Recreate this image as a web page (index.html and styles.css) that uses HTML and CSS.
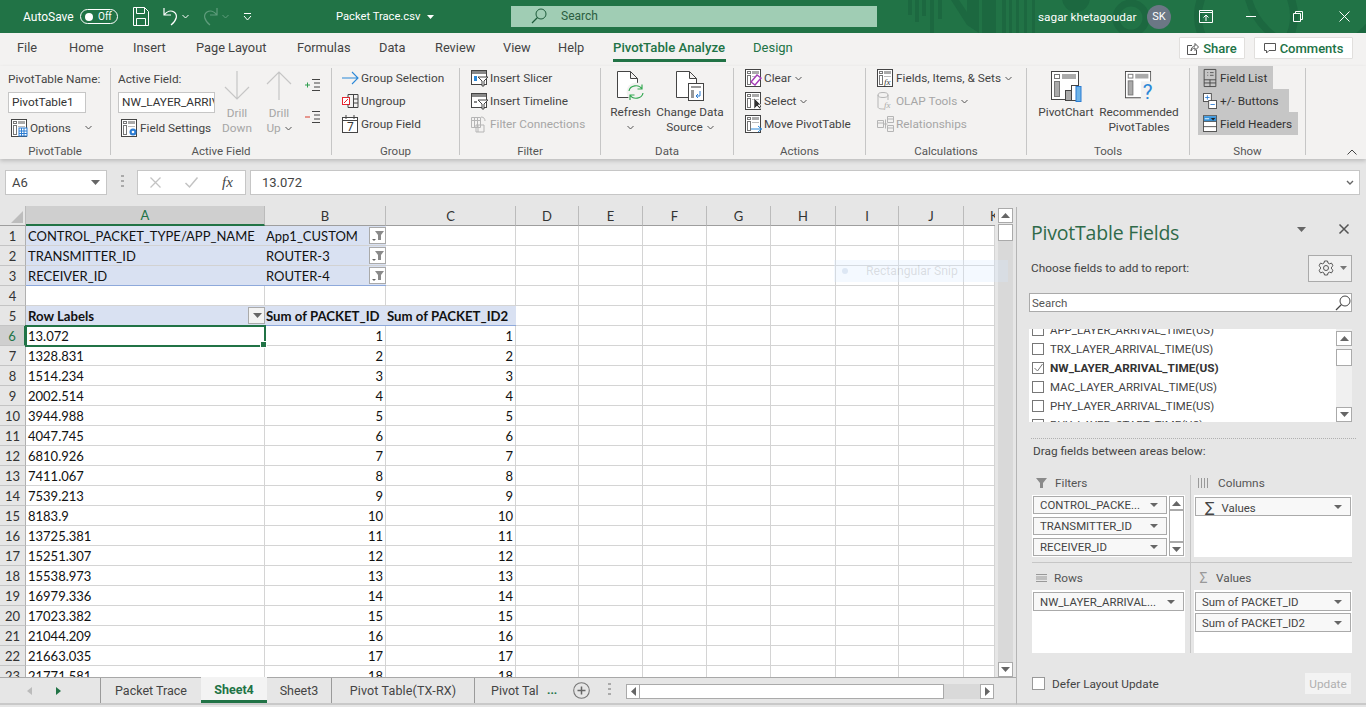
FILE: index.html
```html
<!DOCTYPE html>
<html lang="en">
<head>
<meta charset="utf-8">
<title>Packet Trace.csv - Excel</title>
<link rel="stylesheet" href="styles.css">
</head>
<body>
<svg class="defs" width="0" height="0" aria-hidden="true">
  <defs>
    <symbol id="pv" viewBox="0 0 17 18">
      <rect x=".5" y=".5" width="15" height="17" fill="#fff" stroke="#444"/>
      <rect x="2.5" y="2.5" width="3" height="2" fill="#fff" stroke="#777"/>
      <rect x="7" y="2" width="7" height="3" fill="#aaa"/>
      <rect x="2.5" y="6.5" width="3" height="9" fill="#fff" stroke="#777"/>
      <rect x="7" y="7" width="7" height="1" fill="#bbb"/>
    </symbol>
    <symbol id="large" viewBox="0 0 28 30">
      <rect x=".5" y=".5" width="27" height="28" fill="#fff" stroke="#444"/>
      <rect x="3.5" y="3.5" width="5" height="4" fill="#fff" stroke="#777"/>
      <rect x="11" y="3" width="14" height="5" fill="#aaa"/>
      <rect x="3.5" y="10.5" width="5" height="15" fill="#aaa" stroke="#777"/>
    </symbol>
    <symbol id="tri" viewBox="0 0 9 5"><path d="M0 0h9L4.500 5z" fill="#666"/></symbol>
    <symbol id="chev" viewBox="0 0 7 5"><path d="M.5 1l3 3 3-3" fill="none" stroke="#555" stroke-width="1"/></symbol>
  </defs>
</svg>

<header class="titlebar">
  <svg class="decor" width="460" height="33" viewBox="0 0 460 33" aria-hidden="true">
    <g fill="#1c6840">
      <rect x="2" y="0" width="4" height="15"/><rect x="9" y="0" width="4" height="22"/><rect x="16" y="0" width="4" height="16"/><rect x="24" y="0" width="4" height="33"/><rect x="32" y="0" width="4" height="19"/>
      <path d="M45 0h8l8 12V0h12v33H73L61 25z"/>
      <rect x="76" y="0" width="14" height="33"/><rect x="96" y="0" width="4" height="33"/><rect x="103" y="0" width="3" height="33"/><rect x="110" y="0" width="3" height="33"/><rect x="118" y="0" width="3" height="33"/><rect x="126" y="0" width="3" height="33"/>
      <circle cx="170" cy="-2" r="14"/>
    </g>
    <g fill="none" stroke="#1c6840">
      <circle cx="225" cy="18" r="15" stroke-width="7"/>
      <circle cx="340" cy="16" r="48" stroke-width="8"/>
      <circle cx="410" cy="-20" r="70" stroke-width="7"/>
    </g>
  </svg>
  <span class="autosave">AutoSave</span>
  <span class="toggle"><i class="knob"></i><span>Off</span></span>
  <svg class="qa-save" width="16" height="19" viewBox="0 0 16 19"><path d="M.5.500h11l4 4v14H.5zM3.500.500v6h8v-6M3.500 18.500v-7h9v7" fill="none" stroke="#fff"/></svg>
  <svg class="qa-undo" width="16" height="19" viewBox="0 0 16 19"><path d="M1 1v7h7M1 8c3-4 7-5 10-3 4 3 3 8-3 13" fill="none" stroke="#fff" stroke-width="1.200"/></svg>
  <svg class="qa-chev" width="7" height="5" viewBox="0 0 7 5"><path d="M.5 1l3 3 3-3" fill="none" stroke="#fff"/></svg>
  <svg class="qa-redo" width="16" height="19" viewBox="0 0 16 19"><path d="M15 1v7H8M15 8c-3-4-7-5-10-3-4 3-3 8 3 13" fill="none" stroke="#5f9c7c" stroke-width="1.200"/></svg>
  <svg class="qa-chev2" width="7" height="5" viewBox="0 0 7 5"><path d="M.5 1l3 3 3-3" fill="none" stroke="#5f9c7c"/></svg>
  <svg class="qa-more" width="9" height="8" viewBox="0 0 9 8"><path d="M1 .500h7M1 3l3.500 4L8 3" fill="none" stroke="#fff"/></svg>
  <span class="doc">Packet Trace.csv</span>
  <svg class="doc-caret" width="7" height="4" viewBox="0 0 7 4"><path d="M0 0h7L3.500 4z" fill="#fff"/></svg>
  <div class="searchbox">
    <svg width="16" height="16" viewBox="0 0 16 16"><circle cx="10" cy="6" r="5" fill="none" stroke="#1d5b3a"/><path d="M6.500 9.500L1 15" stroke="#1d5b3a" stroke-width="1.200"/></svg>
    <span>Search</span>
  </div>
  <span class="user">sagar khetagoudar</span>
  <span class="avatar">SK</span>
  <div class="winbtns">
    <svg width="14" height="13" viewBox="0 0 14 13"><path d="M.5 2.500h13v10H.5zM.5.500h13v2h-13zM7 11V5M4.500 7.500L7 5l2.500 2.500" fill="none" stroke="#fff"/></svg>
    <svg width="10" height="1" viewBox="0 0 10 1"><path d="M0 .500h10" stroke="#fff"/></svg>
    <svg width="10" height="11" viewBox="0 0 10 11"><path d="M.5 2.500h7v8h-7zM2.500 2.500v-2h7v8h-2" fill="none" stroke="#fff"/></svg>
    <svg width="11" height="11" viewBox="0 0 11 11"><path d="M.5.500l10 10M10.500.500l-10 10" stroke="#fff"/></svg>
  </div>
</header>

<nav class="tabsrow">
  <div class="tabs">
    <span>File</span><span>Home</span><span>Insert</span><span>Page Layout</span><span>Formulas</span><span>Data</span><span>Review</span><span>View</span><span>Help</span>
    <span class="ctx active">PivotTable Analyze</span><span class="ctx">Design</span>
  </div>
  <button class="share">
    <svg width="12" height="13" viewBox="0 0 12 13"><path d="M5 3.500H.5v9h9V8M4 9c0-3 2-5 4-5V1.500L11.500 5 8 8.500V6C6 6 5 7 4 9z" fill="none" stroke="#555"/></svg>
    <span>Share</span>
  </button>
  <button class="comments">
    <svg width="12" height="13" viewBox="0 0 12 13"><path d="M.5 1.500h11v7H5L2.500 11V8.500h-2z" fill="none" stroke="#555"/></svg>
    <span>Comments</span>
  </button>
</nav>

<section class="ribbon">
  <div class="group g1">
    <div class="body">
      <div class="stack">
        <div class="label-row">PivotTable Name:</div>
        <div class="field-row"><span class="rinput w78">PivotTable1</span></div>
        <div class="row tight"><svg class="ic" width="17" height="18"><use href="#pv"/><rect x="8" y="9" width="8" height="8" fill="#fff" stroke="#2b7cd3"/><path d="M10.500 9v8M13 9v8M8 12h8M8 14.500h8" stroke="#2b7cd3"/></svg><span>Options</span><svg class="chev mlo" width="7" height="5"><use href="#chev"/></svg></div>
      </div>
    </div>
    <div class="glabel">PivotTable</div>
  </div>

  <div class="group g2">
    <div class="body">
      <div class="stack">
        <div class="label-row">Active Field:</div>
        <div class="field-row"><span class="rinput w97">NW_LAYER_ARRIV</span></div>
        <div class="row tight"><svg class="ic" width="17" height="18"><use href="#pv"/><circle cx="12" cy="13" r="3.500" fill="#2b7cd3"/><circle cx="12" cy="13" r="1.300" fill="#fff"/></svg><span>Field Settings</span></div>
      </div>
      <div class="drill">
        <svg width="26" height="29" viewBox="0 0 26 29"><path d="M13 0v28M1 16l12 12 12-12" fill="none" stroke="#c6c6c6" stroke-width="1.200"/></svg>
        <span>Drill</span><span>Down</span>
      </div>
      <div class="drill">
        <svg width="26" height="29" viewBox="0 0 26 29"><path d="M13 29V1M1 13L13 1l12 12" fill="none" stroke="#c6c6c6" stroke-width="1.200"/></svg>
        <span>Drill</span><span>Up <svg width="7" height="5"><use href="#chev"/></svg></span>
      </div>
      <div class="pm">
        <svg width="15" height="14" viewBox="0 0 15 14"><path d="M0 7h5M2.500 4.500v5" stroke="#2e9e4f"/><path d="M7 1.500h8M9 5h6M9 9h6M7 12.500h8" stroke="#444"/></svg>
        <svg width="15" height="14" viewBox="0 0 15 14"><path d="M0 7h5" stroke="#d83b2b"/><path d="M7 1.500h8M9 5h6M9 9h6M7 12.500h8" stroke="#444"/></svg>
      </div>
    </div>
    <div class="glabel">Active Field</div>
  </div>

  <div class="group g3">
    <div class="body list">
      <div class="row"><svg class="ic" width="17" height="18" viewBox="0 0 17 18"><path d="M0 9h16M10 3l6 6-6 6" fill="none" stroke="#2b88d8" stroke-width="1.100"/></svg><span>Group Selection</span></div>
      <div class="row"><svg class="ic" width="17" height="18" viewBox="0 0 17 18"><rect x=".5" y="5.500" width="7" height="7" fill="#fff" stroke="#e8252f"/><path d="M2 11l4-4" stroke="#e8252f"/><path d="M6 2.500h10v13H6M11.500 2.500v13M11.500 7h4.500M11.500 11h4.500M6 2.500v3M6 12.500v3" fill="none" stroke="#444"/></svg><span>Ungroup</span></div>
      <div class="row"><svg class="ic" width="17" height="18" viewBox="0 0 17 18"><rect x=".5" y="2.500" width="15" height="15" fill="#fff" stroke="#444"/><path d="M.5 5.500h15M4 0v4M12 0v4" stroke="#444"/><text x="5" y="15.500" class="cal">7</text></svg><span>Group Field</span></div>
    </div>
    <div class="glabel">Group</div>
  </div>

  <div class="group g4">
    <div class="body list">
      <div class="row"><svg class="ic" width="17" height="18" viewBox="0 0 17 18"><rect x=".5" y="1.500" width="15" height="14" fill="#fff" stroke="#444"/><rect x="1" y="2" width="14" height="3" fill="#888"/><rect x="3" y="7" width="3" height="5" fill="#2b88d8"/><path d="M7 8h10l-4 4v5h-2v-5z" fill="#fff" stroke="#444"/></svg><span>Insert Slicer</span></div>
      <div class="row"><svg class="ic" width="17" height="18" viewBox="0 0 17 18"><rect x=".5" y="1.500" width="15" height="14" fill="#fff" stroke="#444"/><rect x="1" y="2" width="14" height="3" fill="#888"/><rect x="3" y="9" width="3" height="2" fill="#888"/><path d="M7 8h10l-4 4v5h-2v-5z" fill="#fff" stroke="#444"/></svg><span>Insert Timeline</span></div>
      <div class="row off"><svg class="ic" width="17" height="18" viewBox="0 0 17 18"><path d="M.5 2.500h9v10h-9zM.5 5.500h9M3.500 2.500v10M6.500 2.500v10M10 2c3 0 4 2 4 4M5 10h8v7H5zM7 10v7" fill="#f3f2f1" stroke="#b5b5b5"/></svg><span>Filter Connections</span></div>
    </div>
    <div class="glabel">Filter</div>
  </div>

  <div class="group g5">
    <div class="body">
      <div class="big w-ref">
        <svg width="28" height="31" viewBox="0 0 28 31"><path d="M.5.500h13l7 7v19H.5zM13.500.500v7h7" fill="#fff" stroke="#444"/><circle cx="19" cy="21" r="9.500" fill="#f3f2f1"/><path d="M12 20c1-6 10-7 13-2M26 22c-1 6-10 7-13 2M25 13.500V18h-4.500M13 29v-5h4.500" fill="none" stroke="#35a853" stroke-width="1.200"/></svg>
        <span>Refresh</span><svg class="bigchev" width="7" height="5"><use href="#chev"/></svg>
      </div>
      <div class="big w-chg">
        <svg width="36" height="31" viewBox="0 0 36 31"><path d="M4.500.500h13l7 7v19h-20zM17.500.500v7h7" fill="#fff" stroke="#444"/><rect x="16.500" y="12.500" width="15" height="17" fill="#fff" stroke="#444"/><rect x="19" y="15" width="10" height="2" fill="#999"/><rect x="19" y="19" width="3" height="8" fill="#999"/><path d="M28 20v5h-4M26 23l-2 2 2 2" fill="none" stroke="#2b7cd3"/></svg>
        <span>Change Data</span><span>Source <svg width="7" height="5"><use href="#chev"/></svg></span>
      </div>
    </div>
    <div class="glabel">Data</div>
  </div>

  <div class="group g6">
    <div class="body list">
      <div class="row"><svg class="ic" width="17" height="18"><use href="#pv"/><path d="M6 13l6-7 4 3-6 7z" fill="#fff" stroke="#a33bb5" stroke-width="1.400"/></svg><span>Clear <svg width="7" height="5"><use href="#chev"/></svg></span></div>
      <div class="row"><svg class="ic" width="17" height="18"><use href="#pv"/><path d="M9 6v11l3-3 3 3 1-1-3-3h3z" fill="#333" stroke="#fff" stroke-width=".6"/></svg><span>Select <svg width="7" height="5"><use href="#chev"/></svg></span></div>
      <div class="row"><svg class="ic" width="17" height="18"><use href="#pv"/><path d="M6 14h11M13 11l3.500 3-3.500 3" fill="none" stroke="#2b88d8"/></svg><span>Move PivotTable</span></div>
    </div>
    <div class="glabel">Actions</div>
  </div>

  <div class="group g7">
    <div class="body list">
      <div class="row"><svg class="ic" width="17" height="18"><use href="#pv"/><text x="7" y="16" class="fx">fx</text></svg><span>Fields, Items, &amp; Sets <svg width="7" height="5"><use href="#chev"/></svg></span></div>
      <div class="row off"><svg class="ic" width="17" height="18" viewBox="0 0 17 18"><ellipse cx="6" cy="3" rx="5" ry="2.500" fill="none" stroke="#b5b5b5"/><path d="M1 3v12c0 2 4 2 6 2M11 3v5" fill="none" stroke="#b5b5b5"/><text x="7" y="16" class="fx off">fx</text></svg><span>OLAP Tools <svg width="7" height="5"><use href="#chev"/></svg></span></div>
      <div class="row off"><svg class="ic" width="17" height="18" viewBox="0 0 17 18"><path d="M.5 5.500h6v7h-6zM10.500 1.500h6v6h-6zM10.500 10.500h6v6h-6zM6.500 9h4M8.500 4.500v9M.5 8h6M10.500 4h6M10.500 13h6" fill="none" stroke="#b5b5b5"/></svg><span>Relationships</span></div>
    </div>
    <div class="glabel">Calculations</div>
  </div>

  <div class="group g8">
    <div class="body">
      <div class="big w-chart">
        <svg width="30" height="31" viewBox="0 0 30 31"><use href="#large" width="28" height="30"/><rect x="14.500" y="19.500" width="6" height="10" fill="#aaa" stroke="#444"/><rect x="20.500" y="14.500" width="6" height="15" fill="#fff" stroke="#444"/><rect x="25" y="15.500" width="5" height="15" fill="#6db3e8" stroke="#2b7cd3"/></svg>
        <span>PivotChart</span>
      </div>
      <div class="big w-rec">
        <svg width="30" height="33" viewBox="0 0 30 33"><use href="#large" width="28" height="30"/><rect x="17" y="11" width="13" height="22" fill="#f3f2f1"/><text x="19" y="30" class="qm">?</text></svg>
        <span>Recommended</span><span>PivotTables</span>
      </div>
    </div>
    <div class="glabel">Tools</div>
  </div>

  <div class="group g9">
    <div class="body showlist">
      <div class="show s1"><svg width="14" height="20" viewBox="0 0 14 20"><path d="M.5.500h13v19H.5zM.5 12h13M7 12v7.500M.5 15.500h13" fill="none" stroke="#444"/><path d="M4 4h1M4 7h1M7 4h4M7 7h4" stroke="#555"/></svg><span>Field List</span></div>
      <div class="show s2"><svg width="16" height="20" viewBox="0 0 16 20"><rect x=".5" y="1.500" width="9" height="9" fill="#fff" stroke="#444"/><path d="M2.500 6h5M5 3.500v5" stroke="#2b7cd3"/><rect x="6.500" y="9.500" width="9" height="9" fill="#fff" stroke="#444"/><path d="M8.500 14h5" stroke="#2b7cd3"/></svg><span>+/- Buttons</span></div>
      <div class="show s3"><svg width="16" height="20" viewBox="0 0 16 20"><rect x=".5" y=".500" width="15" height="18" fill="#fff" stroke="#444"/><rect x="1" y="1" width="14" height="6" fill="#3a96dd"/><path d="M2 4h5" stroke="#fff"/><path d="M9 3h5l-2.500 3z" fill="#222"/><path d="M.5 7h15M.5 13h15" stroke="#444"/></svg><span>Field Headers</span></div>
    </div>
    <div class="glabel">Show</div>
  </div>
  <div class="collapse"><svg width="10" height="6" viewBox="0 0 10 6"><path d="M.5 5.500L5 1l4.500 4.500" fill="none" stroke="#444"/></svg></div>
</section>

<section class="formulabar">
  <div class="namebox"><span>A6</span><svg width="9" height="5"><use href="#tri"/></svg></div>
  <span class="grip"></span>
  <div class="fxbox">
    <svg width="11" height="11" viewBox="0 0 11 11"><path d="M.5.500l10 10M10.500.500l-10 10" stroke="#c3c3c3" stroke-width="1.300"/></svg>
    <svg width="13" height="11" viewBox="0 0 13 11"><path d="M.5 6l4 4L12.500.500" fill="none" stroke="#c3c3c3" stroke-width="1.500"/></svg>
    <span class="fxlabel">fx</span>
  </div>
  <div class="finput"><span>13.072</span><svg width="8" height="6" viewBox="0 0 8 6"><path d="M1 1l3 3 3-3" fill="none" stroke="#666" stroke-width="1.400"/></svg></div>
</section>

<main class="workspace">
  <div class="sheetcol">
    <div class="sheetarea">
      <div class="gridwrap">
        <table class="grid">
          <colgroup>
            <col class="c-rh"><col class="c-a"><col class="c-b"><col class="c-c"><col class="c-d"><col class="c-e"><col class="c-f"><col class="c-g"><col class="c-h"><col class="c-i"><col class="c-j"><col class="c-k">
          </colgroup>
          <thead>
            <tr><th class="corner"><i></i></th><th class="csel">A</th><th>B</th><th>C</th><th>D</th><th>E</th><th>F</th><th>G</th><th>H</th><th>I</th><th>J</th><th class="kh">K</th></tr>
          </thead>
          <tbody>
            <tr><th>1</th><td class="pv">CONTROL_PACKET_TYPE/APP_NAME</td><td class="pv hasf">App1_CUSTOM<span class="fbtn"><svg width="12" height="12" viewBox="0 0 12 12"><path d="M3 1h9L9 5v5H6V5z" fill="#8a8a8a"/><path d="M0 9h4L2 11z" fill="#666"/></svg></span></td><td></td><td></td><td></td><td></td><td></td><td></td><td></td><td></td><td></td></tr>
            <tr><th>2</th><td class="pv">TRANSMITTER_ID</td><td class="pv hasf">ROUTER-3<span class="fbtn"><svg width="12" height="12" viewBox="0 0 12 12"><path d="M3 1h9L9 5v5H6V5z" fill="#8a8a8a"/><path d="M0 9h4L2 11z" fill="#666"/></svg></span></td><td></td><td></td><td></td><td></td><td></td><td></td><td></td><td></td><td></td></tr>
            <tr><th>3</th><td class="pv pvb">RECEIVER_ID</td><td class="pv pvb hasf">ROUTER-4<span class="fbtn"><svg width="12" height="12" viewBox="0 0 12 12"><path d="M3 1h9L9 5v5H6V5z" fill="#8a8a8a"/><path d="M0 9h4L2 11z" fill="#666"/></svg></span></td><td></td><td></td><td></td><td></td><td></td><td></td><td></td><td></td><td></td></tr>
            <tr><th>4</th><td></td><td></td><td></td><td></td><td></td><td></td><td></td><td></td><td></td><td></td><td></td></tr>
            <tr class="headrow"><th>5</th><td class="pv pvb hasf b">Row Labels<span class="fbtn dd"><svg width="9" height="5"><use href="#tri"/></svg></span></td><td class="pv pvb b">Sum of PACKET_ID</td><td class="pv pvb b">Sum of PACKET_ID2</td><td></td><td></td><td></td><td></td><td></td><td></td><td></td><td></td></tr>
            <tr><th class="rsel">6</th><td class="active-cell">13.072<i class="handle"></i></td><td class="n">1</td><td class="n">1</td><td></td><td></td><td></td><td></td><td></td><td></td><td></td><td></td></tr>
            <tr><th>7</th><td>1328.831</td><td class="n">2</td><td class="n">2</td><td></td><td></td><td></td><td></td><td></td><td></td><td></td><td></td></tr>
            <tr><th>8</th><td>1514.234</td><td class="n">3</td><td class="n">3</td><td></td><td></td><td></td><td></td><td></td><td></td><td></td><td></td></tr>
            <tr><th>9</th><td>2002.514</td><td class="n">4</td><td class="n">4</td><td></td><td></td><td></td><td></td><td></td><td></td><td></td><td></td></tr>
            <tr><th>10</th><td>3944.988</td><td class="n">5</td><td class="n">5</td><td></td><td></td><td></td><td></td><td></td><td></td><td></td><td></td></tr>
            <tr><th>11</th><td>4047.745</td><td class="n">6</td><td class="n">6</td><td></td><td></td><td></td><td></td><td></td><td></td><td></td><td></td></tr>
            <tr><th>12</th><td>6810.926</td><td class="n">7</td><td class="n">7</td><td></td><td></td><td></td><td></td><td></td><td></td><td></td><td></td></tr>
            <tr><th>13</th><td>7411.067</td><td class="n">8</td><td class="n">8</td><td></td><td></td><td></td><td></td><td></td><td></td><td></td><td></td></tr>
            <tr><th>14</th><td>7539.213</td><td class="n">9</td><td class="n">9</td><td></td><td></td><td></td><td></td><td></td><td></td><td></td><td></td></tr>
            <tr><th>15</th><td>8183.9</td><td class="n">10</td><td class="n">10</td><td></td><td></td><td></td><td></td><td></td><td></td><td></td><td></td></tr>
            <tr><th>16</th><td>13725.381</td><td class="n">11</td><td class="n">11</td><td></td><td></td><td></td><td></td><td></td><td></td><td></td><td></td></tr>
            <tr><th>17</th><td>15251.307</td><td class="n">12</td><td class="n">12</td><td></td><td></td><td></td><td></td><td></td><td></td><td></td><td></td></tr>
            <tr><th>18</th><td>15538.973</td><td class="n">13</td><td class="n">13</td><td></td><td></td><td></td><td></td><td></td><td></td><td></td><td></td></tr>
            <tr><th>19</th><td>16979.336</td><td class="n">14</td><td class="n">14</td><td></td><td></td><td></td><td></td><td></td><td></td><td></td><td></td></tr>
            <tr><th>20</th><td>17023.382</td><td class="n">15</td><td class="n">15</td><td></td><td></td><td></td><td></td><td></td><td></td><td></td><td></td></tr>
            <tr><th>21</th><td>21044.209</td><td class="n">16</td><td class="n">16</td><td></td><td></td><td></td><td></td><td></td><td></td><td></td><td></td></tr>
            <tr><th>22</th><td>21663.035</td><td class="n">17</td><td class="n">17</td><td></td><td></td><td></td><td></td><td></td><td></td><td></td><td></td></tr>
            <tr><th>23</th><td>21771.581</td><td class="n">18</td><td class="n">18</td><td></td><td></td><td></td><td></td><td></td><td></td><td></td><td></td></tr>
          </tbody>
        </table>
      </div>
      <div class="vscroll">
        <div class="sbtn up"><svg width="9" height="5" viewBox="0 0 9 5"><path d="M0 5h9L4.500 0z" fill="#666"/></svg></div>
        <div class="thumb"></div>
        <div class="track"></div>
        <div class="sbtn down"><svg width="9" height="5"><use href="#tri"/></svg></div>
      </div>
      <div class="snip"><i></i><span>Rectangular Snip</span></div>
    </div>
    <div class="sheettabs">
      <div class="nav">
        <svg width="5" height="8" viewBox="0 0 5 8"><path d="M5 0v8L0 4z" fill="#bbb"/></svg>
        <svg width="5" height="8" viewBox="0 0 5 8"><path d="M0 0v8l5-4z" fill="#217346"/></svg>
      </div>
      <div class="stab t1">Packet Trace</div>
      <div class="stab t2 on">Sheet4</div>
      <div class="stab t3">Sheet3</div>
      <div class="stab t4">Pivot Table(TX-RX)</div>
      <div class="stab t5"><span>Pivot Tal</span></div>
      <div class="more">...</div>
      <div class="add"><svg width="17" height="17" viewBox="0 0 17 17"><circle cx="8.500" cy="8.500" r="7.800" fill="none" stroke="#777" stroke-width="1.100"/><path d="M8.500 4.500v8M4.500 8.500h8" stroke="#666" stroke-width="1.500"/></svg></div>
      <span class="grip tabgrip"></span>
      <div class="hscroll">
        <div class="hbtn"><svg width="5" height="9" viewBox="0 0 5 9"><path d="M5 0v9L0 4.500z" fill="#666"/></svg></div>
        <div class="hthumb"></div>
        <div class="htrack"></div>
        <div class="hbtn"><svg width="5" height="9" viewBox="0 0 5 9"><path d="M0 0v9l5-4.500z" fill="#666"/></svg></div>
      </div>
    </div>
  </div>

  <aside class="panel">
    <div class="ptitle"><h2>PivotTable Fields</h2>
      <svg class="pcaret" width="9" height="5"><use href="#tri"/></svg>
      <svg class="pclose" width="10" height="10" viewBox="0 0 10 10"><path d="M.5.500l9 9M9.500.500l-9 9" stroke="#555" stroke-width="1.500"/></svg>
    </div>
    <div class="pchoose"><span>Choose fields to add to report:</span>
      <div class="gearbtn">
        <svg width="16" height="16" viewBox="0 0 16 16"><path d="M6.500 1h3l.5 2 1.500.8 2-.7 1.500 2.600-1.500 1.400v1.800l1.500 1.400-1.500 2.600-2-.7-1.500.8-.5 2h-3l-.5-2-1.500-.8-2 .7L1 10.300l1.500-1.400V7.100L1 5.700l1.500-2.600 2 .7L6 3z" fill="none" stroke="#555"/><circle cx="8" cy="8" r="2.500" fill="none" stroke="#555"/></svg>
        <svg width="7" height="4" viewBox="0 0 7 4"><path d="M0 0h7L3.500 4z" fill="#777"/></svg>
      </div>
    </div>
    <div class="psearch"><span>Search</span><svg width="16" height="16" viewBox="0 0 16 16"><circle cx="10" cy="6" r="5" fill="none" stroke="#444"/><path d="M6.500 9.500L1 15" stroke="#444" stroke-width="1.200"/></svg></div>
    <div class="fieldlist">
      <div class="fields">
        <div class="fitem"><i class="cb"></i>APP_LAYER_ARRIVAL_TIME(US)</div>
        <div class="fitem"><i class="cb"></i>TRX_LAYER_ARRIVAL_TIME(US)</div>
        <div class="fitem b"><i class="cb"><svg width="11" height="11" viewBox="0 0 11 11"><path d="M1.500 6l3 3 5-7" fill="none" stroke="#777"/></svg></i>NW_LAYER_ARRIVAL_TIME(US)</div>
        <div class="fitem"><i class="cb"></i>MAC_LAYER_ARRIVAL_TIME(US)</div>
        <div class="fitem"><i class="cb"></i>PHY_LAYER_ARRIVAL_TIME(US)</div>
        <div class="fitem"><i class="cb"></i>PHY_LAYER_START_TIME(US)</div>
      </div>
      <div class="fscroll">
        <div class="sbtn"><svg width="9" height="5" viewBox="0 0 9 5"><path d="M0 5h9L4.500 0z" fill="#666"/></svg></div>
        <div class="fthumb"></div>
        <div class="track"></div>
        <div class="sbtn"><svg width="9" height="5"><use href="#tri"/></svg></div>
      </div>
    </div>
    <div class="dotted"></div>
    <div class="dragl">Drag fields between areas below:</div>
    <div class="areas">
      <div class="area a-f">
        <div class="ahead"><svg width="12" height="12" viewBox="0 0 12 12"><path d="M0 1h11L7 6v5H4V6z" fill="#8a8a8a"/></svg><span>Filters</span></div>
        <div class="abox filterbox">
          <div class="chips">
            <div class="chip"><span>CONTROL_PACKE...</span><svg width="8" height="4" viewBox="0 0 8 4"><path d="M0 0h8L4 4z" fill="#666"/></svg></div>
            <div class="chip"><span>TRANSMITTER_ID</span><svg width="8" height="4" viewBox="0 0 8 4"><path d="M0 0h8L4 4z" fill="#666"/></svg></div>
            <div class="chip"><span>RECEIVER_ID</span><svg width="8" height="4" viewBox="0 0 8 4"><path d="M0 0h8L4 4z" fill="#666"/></svg></div>
          </div>
          <div class="miniscroll">
            <div class="sbtn"><svg width="9" height="5" viewBox="0 0 9 5"><path d="M0 5h9L4.500 0z" fill="#666"/></svg></div>
            <div class="mthumb"></div>
            <div class="sbtn"><svg width="9" height="5"><use href="#tri"/></svg></div>
          </div>
        </div>
      </div>
      <div class="area a-c">
        <div class="ahead"><svg width="10" height="10" viewBox="0 0 10 10"><path d="M.5 0v10M3.500 0v10M6.500 0v10M9.500 0v10" stroke="#999"/></svg><span>Columns</span></div>
        <div class="abox"><div class="chips">
          <div class="chip sigma"><span><b>∑</b>Values</span><svg width="8" height="4" viewBox="0 0 8 4"><path d="M0 0h8L4 4z" fill="#666"/></svg></div>
        </div></div>
      </div>
      <div class="area a-r">
        <div class="ahead"><svg width="11" height="8" viewBox="0 0 11 8"><path d="M0 .500h11M0 3h11M0 5h11M0 7.500h11" stroke="#999"/></svg><span>Rows</span></div>
        <div class="abox lower"><div class="chips">
          <div class="chip"><span>NW_LAYER_ARRIVAL...</span><svg width="8" height="4" viewBox="0 0 8 4"><path d="M0 0h8L4 4z" fill="#666"/></svg></div>
        </div></div>
      </div>
      <div class="area a-v">
        <div class="ahead"><span class="sig">Σ</span><span>Values</span></div>
        <div class="abox lower"><div class="chips">
          <div class="chip"><span>Sum of PACKET_ID</span><svg width="8" height="4" viewBox="0 0 8 4"><path d="M0 0h8L4 4z" fill="#666"/></svg></div>
          <div class="chip"><span>Sum of PACKET_ID2</span><svg width="8" height="4" viewBox="0 0 8 4"><path d="M0 0h8L4 4z" fill="#666"/></svg></div>
        </div></div>
      </div>
    </div>
    <div class="pfoot">
      <i class="cb foot"></i><span>Defer Layout Update</span>
      <button class="update">Update</button>
    </div>
  </aside>
</main>
</body>
</html>
```

FILE: styles.css
```css
* { box-sizing: border-box; }
html, body { margin: 0; padding: 0; height: 707px; width: 1366px; overflow: hidden; }
body { font-family: "Roboto", "Noto Sans", sans-serif; font-size: 11.800px; color: #444; background: #e6e6e6; }
.defs { display: block; height: 0; }
svg { display: block; flex: none; overflow: visible; }
span > svg { display: inline-block; vertical-align: middle; margin-left: 1px; }
h2 { margin: 0; font-weight: 400; }
button { font: inherit; }

/* title bar */
.titlebar { position: relative; height: 33px; background: #217346; color: #fff; display: flex; align-items: center; font-size: 12px; padding-left: 23px; overflow: hidden; white-space: nowrap; }
.titlebar > * { flex: none; }
.decor { position: absolute; left: 906px; top: 0; overflow: hidden; }
.titlebar > *:not(.decor) { position: relative; }
.autosave { width: 57px; }
.toggle { width: 38px; height: 15px; border: 1px solid #fff; border-radius: 8px; display: flex; align-items: center; gap: 5px; padding-left: 4px; font-size: 10px; }
.knob { width: 8px; height: 8px; border-radius: 50%; background: #fff; }
.qa-save { margin-left: 15px; }
.qa-undo { margin-left: 14px; }
.qa-chev { margin-left: 3px; }
.qa-redo { margin-left: 13px; }
.qa-chev2 { margin-left: 4px; }
.qa-more { margin-left: 14px; }
.doc { margin-left: 84px; width: 90px; font-size: 11.200px; }
.doc-caret { margin-left: 1px; }
.searchbox { margin-left: 77px; width: 366px; height: 21px; margin-top: -1px; background: #a0cdb4; color: #2a5d41; display: flex; align-items: center; gap: 14px; padding-left: 20px; }
.user { margin-left: 161px; width: 102px; font-size: 11.800px; }
.avatar { margin-left: 7px; width: 24px; height: 24px; border-radius: 50%; background: #6b7785; display: flex; align-items: center; justify-content: center; font-size: 11px; }
.winbtns { margin-left: 28px; display: flex; align-items: center; }
.winbtns svg:nth-child(2) { margin-left: 33px; }
.winbtns svg:nth-child(3) { margin-left: 37px; }
.winbtns svg:nth-child(4) { margin-left: 36px; }

/* tab row */
.tabsrow { height: 33px; background: #f3f2f1; display: flex; align-items: flex-start; padding-left: 17px; }
.tabs { display: grid; grid-template-columns: 52px 64px 63px 101px 82px 56px 68px 55px 55px 140px 60px; font-size: 12.800px; width: 1162px; height: 29px; align-items: stretch; }
.tabs span { line-height: 30px; white-space: nowrap; }
.tabs .ctx { color: #217346; font-size: 13px; }
.tabs .active { font-weight: 500; font-size: 13.200px; width: 113px; border-bottom: 3px solid #217346; height: 29px; line-height: 30px; }
.share, .comments { margin-top: 4px; height: 22px; background: #fff; border: 1px solid #e1dfdd; display: flex; align-items: center; justify-content: center; gap: 4px; padding: 0; font-size: 13px; font-weight: 500; border-radius: 1px; }
.share { width: 66px; color: #217346; }
.comments { width: 99px; margin-left: 9px; color: #217346; }

/* ribbon */
.ribbon { height: 93px; background: #f3f2f1; display: flex; padding: 2px 0 4px; box-shadow: 0 2px 4px rgba(0,0,0,.18); position: relative; }
.group { flex: none; display: flex; flex-direction: column; border-right: 1px solid #c6c6c6; height: 87px; }
.body { flex: 1; margin-top: -2px; display: flex; min-height: 0; }
.glabel { height: 11px; line-height: 14px; text-align: center; font-size: 11.500px; color: #555; }
.g1 { width: 111px; } .g2 { width: 221px; } .g3 { width: 128px; } .g4 { width: 141px; }
.g5 { width: 133px; } .g6 { width: 132px; } .g7 { width: 161px; } .g8 { width: 163px; } .g9 { width: 116px; }
.stack { display: flex; flex-direction: column; padding-left: 8px; }
.g2 .stack { width: 105px; padding-left: 7px; flex: none; }
.label-row { height: 26px; padding-top: 6px; line-height: 15px; white-space: nowrap; }
.field-row { height: 23px; }
.rinput { display: block; height: 21px; background: #fff; border: 1px solid #c6c6c6; line-height: 19px; padding-left: 3px; color: #333; overflow: hidden; white-space: nowrap; }
.w78 { width: 78px; } .w97 { width: 97px; }
.row { height: 23px; display: flex; align-items: center; gap: 2px; white-space: nowrap; flex: none; }
.row .ic { width: 17px; height: 18px; }
.tight { height: 25px; padding-left: 3px; }
.mlo { margin-left: 12px; }
.off { color: #a6a6a6; }
.list { flex-direction: column; }
.g3 .body { padding-left: 10px; } .g4 .body { padding-left: 11px; }
.g6 .body { padding-left: 11px; } .g7 .body { padding-left: 11px; }
.drill { width: 42px; display: flex; flex-direction: column; align-items: center; color: #a6a6a6; line-height: 15px; padding-top: 5px; }
.drill svg { margin-bottom: 6px; }
.drill span svg { margin: 0 0 0 1px; display: inline-block; }
.pm { display: flex; flex-direction: column; gap: 18px; padding-top: 12px; margin-left: 5px; }
.big { display: flex; flex-direction: column; align-items: center; line-height: 15px; padding-top: 5px; white-space: nowrap; }
.big > svg:first-child { height: 31px; margin-bottom: 3px; }
.bigchev { margin-top: 5px; }
.big span svg { margin: 0 0 0 1px; }
.g5 .body { padding-left: 4px; }
.w-ref { width: 51px; } .w-chg { width: 68px; }
.g8 .body { padding-left: 9px; }
.w-chart { width: 60px; } .w-rec { width: 86px; }
.showlist { flex-direction: column; align-items: flex-start; padding-left: 8px; }
.show { height: 23px; background: #c6c6c6; display: flex; align-items: center; gap: 3px; padding-left: 5px; white-space: nowrap; color: #333; flex: none; }
.show svg { width: 14px; height: 18px; }
.s1 { width: 75px; } .s2 { width: 91px; } .s3 { width: 100px; }
.collapse { flex: 1; display: flex; align-items: flex-end; justify-content: flex-end; padding: 0 9px 0 0; }
.cal { font-size: 12px; fill: #333; font-family: "Roboto", sans-serif; }
.fx { font-size: 9px; font-style: italic; fill: #333; font-family: "Liberation Serif", serif; }
.fx.off { fill: #aaa; }
.qm { font-size: 22px; fill: #2b88d8; font-family: "Roboto", sans-serif; }

/* formula bar */
.formulabar { height: 47px; background: #e6e6e6; display: flex; padding: 11px 6px 11px 5px; align-items: stretch; }
.namebox { width: 102px; height: 25px; background: #fff; border: 1px solid #c6c6c6; display: flex; align-items: center; justify-content: space-between; padding: 0 6px; font-size: 13px; }
.grip { width: 3px; height: 15px; margin: 5px 13px 0 14px; background: repeating-linear-gradient(#aaa 0 2px, transparent 2px 5px); flex: none; }
.fxbox { width: 109px; height: 25px; background: #fff; border: 1px solid #c6c6c6; display: flex; align-items: center; padding-left: 12px; gap: 24px; }
.fxlabel { font-family: "Liberation Serif", serif; font-style: italic; font-size: 15px; color: #444; }
.finput { margin-left: 4px; flex: 1; height: 25px; background: #fff; border: 1px solid #c6c6c6; display: flex; align-items: center; justify-content: space-between; padding: 0 5px 0 11px; font-size: 13px; }

/* sheet */
.workspace { display: flex; height: 499px; }
.sheetcol { width: 1016px; display: flex; flex-direction: column; }
.sheetarea { position: relative; height: 471px; display: flex; }
.gridwrap { width: 995px; height: 471px; overflow: hidden; flex: none; }
.grid { border-collapse: separate; border-spacing: 0; table-layout: fixed; width: 995px; font-family: "Lato", sans-serif; font-size: 13px; color: #111; }
.c-rh { width: 26px; } .c-a { width: 239px; } .c-b { width: 121px; } .c-c { width: 130px; }
.c-d { width: 63px; } .c-e { width: 64px; } .c-f { width: 64px; } .c-g { width: 64px; } .c-h { width: 65px; }
.c-i { width: 63px; } .c-j { width: 65px; } .c-k { width: 31px; }
.grid th { background: #e6e6e6; font-weight: 400; color: #333; text-align: center; padding: 0; border-right: 1px solid #b0b0b0; border-bottom: 1px solid #c4c4c4; font-size: 13px; }
.grid thead th { height: 20px; border-bottom: 1px solid #9e9e9e; border-right: 1px solid #bbb; position: relative; }
.grid tbody th { height: 20px; }
.grid td { height: 20px; padding: 1px 2px 0 2px; border-right: 1px solid #d4d4d4; border-bottom: 1px solid #d4d4d4; background: #fff; white-space: nowrap; overflow: hidden; position: relative; line-height: 18px; }
.corner i { display: block; width: 0; height: 0; margin: 2px 2px 0 auto; border-style: solid; border-width: 0 0 12px 12px; border-color: transparent transparent #bdbdbd transparent; }
.grid .corner { border-right: 1px solid #bbb; }
.grid .csel { background: #cfcfcf; color: #217346; border-bottom: 2px solid #217346; }
.grid .rsel { background: #cfcfcf; color: #217346; border-right: 2px solid #217346; }
.grid td.pv { background: #d9e1f2; border-right: 0; border-bottom: 1px solid #d9e1f2; }
.grid td.pvb { border-bottom: 1px solid #8ea9db; }
.grid tr:nth-child(1) td.pv, .grid tr:nth-child(2) td.pv { border-bottom: 1px solid #d2d2d2; }
.grid td.pv + td.pv { padding-left: 1px; }
.grid td.b { font-weight: 700; font-size: 13.200px; }
.grid td.n { text-align: right; }
.grid td.hasf { padding-right: 0; }
.fbtn { float: right; width: 17px; height: 17px; margin: 0; background: #fff; border: 1px solid #aaa; display: flex; align-items: center; justify-content: center; }
.fbtn.dd { background: #f3f3f3; }
.grid .active-cell { overflow: visible; outline: 2px solid #217346; outline-offset: -1px; z-index: 2; }
.handle { position: absolute; right: -3px; bottom: -3px; width: 5px; height: 5px; background: #217346; border: 1px solid #fff; box-sizing: content-box; }
.grid .kh { overflow: hidden; text-align: left; padding-left: 26px; border-right: 0; }
.vscroll { flex: 1; background: #e6e6e6; border-top: 0; display: flex; flex-direction: column; padding: 2px 3px 0 3px; }
.vscroll .track { flex: 1; background: #d9d9d9; }
.sbtn { height: 15px; background: #fff; border: 1px solid #aaa; display: flex; align-items: center; justify-content: center; flex: none; }
.vscroll .thumb { height: 17px; background: #fff; border: 1px solid #aaa; margin-top: 1px; flex: none; }
.vscroll .sbtn, .vscroll .thumb { width: 15px; }
.snip { position: absolute; left: 834px; top: 54px; width: 174px; height: 22px; background: rgba(215,235,255,.28); display: flex; align-items: center; padding-left: 8px; gap: 18px; color: rgba(120,120,120,.22); font-size: 12.200px; z-index: 5; }
.snip i { width: 6px; height: 6px; border-radius: 50%; background: rgba(130,160,200,.2); }

/* sheet tabs */
.sheettabs { height: 28px; border-bottom: 2px solid #c9c9c9; background: #e6e6e6; display: flex; position: relative; border-top: 1px solid #a8a8a8; }
.nav { width: 100px; display: flex; align-items: center; padding-left: 27px; gap: 24px; height: 25px; }
.stab { height: 25px; display: flex; align-items: center; justify-content: center; color: #444; border-left: 1px solid #9a9a9a; white-space: nowrap; overflow: hidden; margin: 0; font-size: 12.500px; }
.t1 { width: 101px; } .t2 { width: 66px; margin-top: -1px; height: 26px; border-left: 0; background: #f3f3f3; color: #217346; font-weight: 700; border-bottom: 3px solid #217346; padding-top: 1px; }
.t3 { width: 64px; border-left: 0; } .t4 { width: 143px; letter-spacing: .15px; } .t5 { width: 66px; justify-content: flex-start; padding-left: 16px; }
.more { width: 17px; color: #217346; font-weight: 700; padding: 1px 0 0 7px; height: 25px; line-height: 22px; }
.add { margin-left: 16px; height: 25px; display: flex; align-items: center; }
.tabgrip { margin: 5px 15px 0 18px; }
.hscroll { width: 368px; height: 15px; margin-top: 6px; display: flex; }
.hbtn { width: 14px; height: 15px; background: #fff; border: 1px solid #aaa; display: flex; align-items: center; justify-content: center; flex: none; }
.hthumb { width: 304px; background: #fff; border: 1px solid #aaa; border-left: 0; flex: none; }
.htrack { flex: 1; background: #d9d9d9; }

/* panel */
.panel { width: 350px; border-left: 1px solid #b5b5b5; border-bottom: 2px solid #c9c9c9; background: #e6e6e6; padding: 0 14px 0 12px; margin-top: 1px; display: flex; flex-direction: column; }
.ptitle { height: 50px; display: flex; align-items: center; padding-left: 2px; flex: none; }
.ptitle h2 { font-size: 19.500px; color: #2f6a49; font-family: "Open Sans", "Roboto", sans-serif; flex: 1; margin-top: 1px; letter-spacing: -.2px; }
.pcaret { margin: 0 0 6px 0; }
.pclose { margin: 0 3px 6px 33px; }
.pchoose { height: 28px; display: flex; align-items: center; justify-content: space-between; padding-left: 2px; margin-top: -3px; flex: none; }
.gearbtn { width: 44px; height: 27px; border: 1px solid #aaa; display: flex; align-items: center; padding-left: 9px; gap: 6px; background: #f0f0f0; }
.psearch { height: 19px; background: #fff; border: 1px solid #aaa; margin-top: 11px; display: flex; align-items: center; justify-content: space-between; padding: 0 0 0 2px; color: #555; font-size: 11.500px; flex: none; }
.fieldlist { height: 93px; margin-top: 17px; background: #fff; display: flex; overflow: hidden; flex: none; }
.fields { flex: 1; margin-top: -9px; overflow: hidden; }
.fitem { height: 19px; display: flex; align-items: center; padding-left: 3px; gap: 6px; color: #444; white-space: nowrap; font-size: 11.400px; }
.fitem.b { font-weight: 700; color: #333; font-size: 11.800px; }
.cb { display: flex; width: 12px; height: 12px; border: 1px solid #777; background: #fff; flex: none; align-items: center; justify-content: center; }
.fscroll { width: 16px; display: flex; flex-direction: column; padding-top: 2px; background: #f0f0f0; }
.fscroll .track { flex: 1; }
.fscroll .fthumb { height: 17px; background: #fff; border: 1px solid #aaa; margin-top: 3px; }
.dotted { margin: 16px -4px 0 2px; border-top: 1px dotted #b0b0b0; flex: none; }
.dragl { margin: 5px 0 0 4px; height: 15px; line-height: 15px; flex: none; }
.areas { margin-top: 16px; margin-left: 3px; display: grid; grid-template-columns: 153px 158px; column-gap: 9px; grid-template-rows: 88px 90px; position: relative; flex: none; }
.area { display: flex; flex-direction: column; }
.ahead { height: 20px; display: flex; align-items: center; gap: 7px; padding: 0 0 4px 4px; color: #555; flex: none; }
.a-c .ahead { gap: 10px; }
.a-r .ahead, .a-v .ahead { height: 27px; padding: 3px 0 0 4px; }
.a-f, .a-r { position: relative; }
.a-f::after { content: ""; position: absolute; right: -6px; top: 0; bottom: -3px; border-right: 1px solid #c6c6c6; }
.a-r::after { content: ""; position: absolute; right: -6px; top: 0; bottom: 0; border-right: 1px solid #c6c6c6; }
.a-f::before { content: ""; position: absolute; left: 0; right: -167px; bottom: 0; border-bottom: 1px solid #c6c6c6; }
.abox { background: #fff; height: 62px; display: flex; gap: 2px; padding: 2px 1px 1px; }
.abox.filterbox { padding: 1px; }
.abox.lower { height: 63px; }
.chips { flex: 1; display: flex; flex-direction: column; gap: 2px; min-width: 0; }
.chip { height: 19px; border: 1px solid #aaa; background: #f8f8f8; display: flex; align-items: center; justify-content: space-between; padding: 0 8px 0 6px; white-space: nowrap; color: #444; flex: none; font-size: 11.400px; }
.filterbox .chip { height: 18px; }
.filterbox .chips { gap: 3px; }
.sigma b { font-weight: 400; font-size: 14px; margin: 0 7px 0 3px; font-family: "DejaVu Sans", sans-serif; }
.miniscroll { width: 15px; display: flex; flex-direction: column; }
.mthumb { flex: 1; background: #fff; border: 1px solid #aaa; }
.miniscroll .sbtn { height: 14px; }
.sig { font-size: 14px; color: #999; width: 11px; text-align: center; }
.pfoot { margin: 20px 0 0 3px; height: 21px; display: flex; align-items: center; gap: 7px; flex: none; }
.cb.foot { border-color: #999; width: 13px; height: 13px; }
.update { margin-left: auto; margin-right: 1px; width: 46px; height: 21px; background: #f3f3f3; color: #b0b0b0; border: 0; padding: 0; }
```
